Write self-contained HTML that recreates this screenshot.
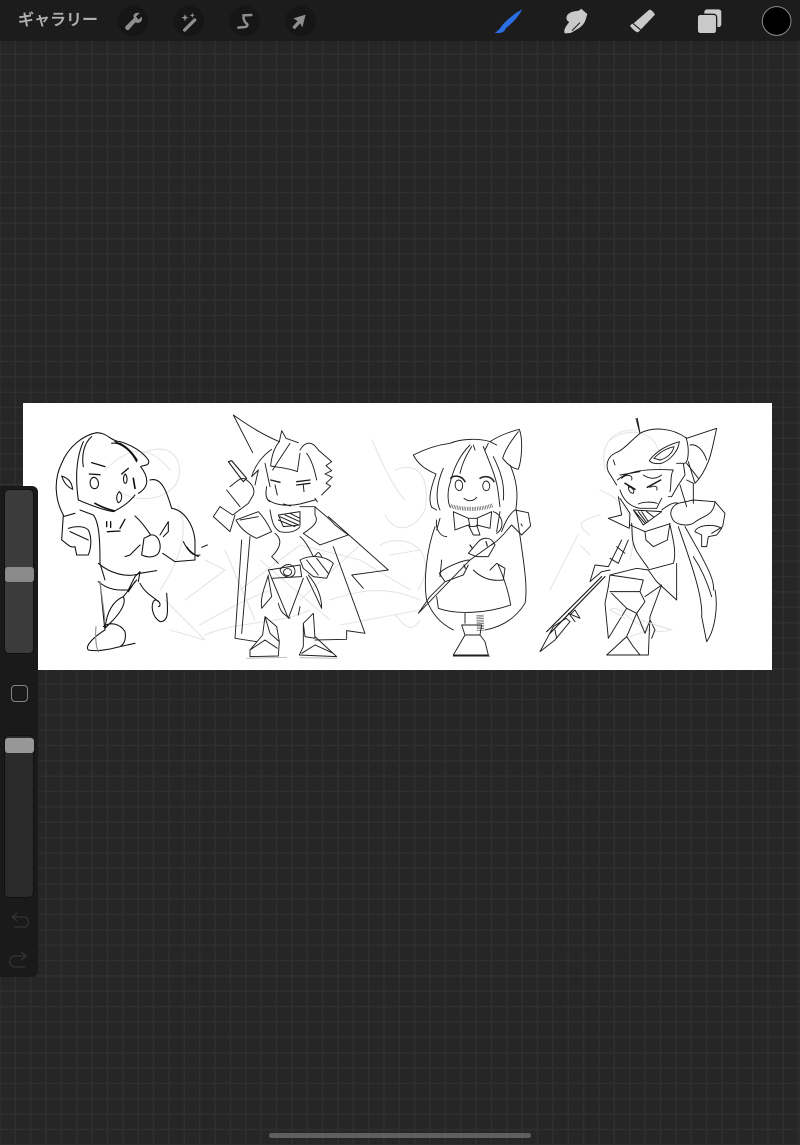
<!DOCTYPE html>
<html lang="ja"><head><meta charset="utf-8"><title>Procreate</title>
<style>
html,body{margin:0;padding:0;background:#262626}
#p{position:relative;width:800px;height:1145px;overflow:hidden;background-color:#262626;
background-image:linear-gradient(90deg,#2f2f2f 1.5px,transparent 1.5px),linear-gradient(#2f2f2f 1.5px,transparent 1.5px);
background-size:15.36px 15.36px;background-position:-.75px 7.5px}
#bar{position:absolute;left:0;top:0;width:800px;height:41px;background:#1c1c1c}
#t{position:absolute;left:18px;top:10px;font:500 16px/22px "Liberation Sans","Noto Sans CJK JP",sans-serif;color:#b0b0b0;white-space:nowrap;width:82px;-webkit-text-stroke:.3px #b0b0b0}
#c{position:absolute;left:23px;top:403px;width:749px;height:267px;background:#fff}
#panel{position:absolute;left:0;top:486px;width:38px;height:491px;background:#1a1a1a;border-radius:0 6px 6px 0}
.s{position:absolute;left:4px;width:30px;border:1px solid #111;box-sizing:border-box;border-radius:5px}
.th{position:absolute;left:5px;width:29px;height:15px;border-radius:3px}
#sq{position:absolute;left:11px;top:199px;width:17px;height:17px;border:1px solid #848484;border-radius:4px;box-sizing:border-box}
#home{position:absolute;left:269px;top:1132.5px;width:262px;height:5px;border-radius:3px;background:#5f5f5f}
svg{position:absolute;left:0;top:0}
.sk{filter:blur(.25px)}
</style></head><body><div id="p">
<div id="c"></div>

<svg width="800" height="1145" viewBox="0 0 800 1145" fill="none" stroke-linecap="round" stroke-linejoin="round">
<g class="sk">
<!-- faint under-sketch -->
<g stroke="#e5e5e5" stroke-width="1.100">
<path d="M140,455 C165,440 185,455 178,480 C170,500 135,505 118,490 M105,470 C130,445 150,445 170,470 M178,505 C190,530 180,560 160,590 M170,630 L205,640 L165,600 M200,625 C225,610 245,600 270,590 M205,635 C240,620 280,625 310,610 M185,600 L225,570 L205,560 M240,590 L300,545 L360,560 L410,590 M260,560 L330,620 M300,600 L360,545 M340,625 L420,610 M225,550 L255,620"/>
<path d="M330,600 C360,590 385,585 420,600 M372,440 C385,470 395,490 405,500 M395,470 C420,460 430,480 425,510 C415,530 395,535 385,515 M380,545 C410,530 440,555 418,590 M390,555 L420,550 M395,615 C405,625 410,635 420,620"/>
<path d="M610,440 C630,425 665,430 660,470 M605,470 C600,445 610,430 635,430 M600,490 C625,500 640,520 630,560 M578,535 L560,570 L550,590 M580,545 L590,555 M590,535 C575,525 580,520 600,515 M610,610 C620,600 640,640 670,630 M620,640 L650,630"/>
</g>

<!-- character 1 -->
<g transform="translate(20,400) scale(.3333)" stroke="#111" stroke-width="3.200">
<path d="M130,345 C105,300 100,240 125,190 C145,140 190,105 230,98 C262,98 270,122 300,125 C335,135 368,155 385,180 C392,198 370,195 362,200 C385,230 390,260 355,280"/>
<path d="M190,125 C170,170 165,230 175,300 M215,110 C190,130 185,170 190,200 M275,130 C300,125 335,155 352,180"/>
<path d="M285,125 C310,135 335,155 350,185 M300,130 C320,140 340,160 350,180" stroke-width="4"/>
<path d="M125,228 C145,235 155,245 158,268 C145,262 132,250 125,228Z M175,300 C210,315 250,330 280,335 C310,320 330,305 345,285"/>
<path d="M225,310 C245,322 265,328 283,333 M340,235 L345,265" stroke-width="5"/>
<path d="M215,188 L255,200 M208,222 L240,224 M305,222 L325,205" stroke-width="4"/>
<path d="M222,232 C240,235 240,268 222,266 C205,262 208,232 222,232Z M316,222 C324,232 322,250 315,250 C308,245 310,225 316,222Z M298,275 C310,285 305,305 295,308 C288,300 288,285 298,275Z"/>
<path d="M130,350 L165,340 M130,345 L125,420 C140,430 150,445 165,440 L170,465 L205,465 C215,440 215,410 205,390 C190,375 160,380 145,385 M150,395 L205,420 M180,330 L220,345 C240,370 240,440 240,490 L255,540"/>
<path d="M260,365 L260,380 M272,365 L272,382 M300,385 L315,358 M262,395 L300,393" stroke-width="4"/>
<path d="M345,348 C370,370 385,395 392,405 C420,400 430,450 410,465 C395,475 375,470 365,465 L372,415 L392,405 M420,405 L445,365 L445,395 L430,410 M360,435 L330,465 L315,470"/>
<path d="M390,240 C425,230 440,275 455,325 C490,330 520,370 525,420 L525,480 L465,485 L428,460 M490,425 C505,455 520,470 540,465 M500,440 C510,455 525,465 535,470 M545,442 L562,435"/>
<path d="M235,490 C270,520 320,535 360,520 L410,512 M240,545 C245,590 250,650 255,690 M235,545 C270,575 305,570 325,570 M325,570 L345,530 L360,515 L355,545"/>
<path d="M360,550 C375,580 400,590 415,605 M440,580 C445,640 445,665 420,665 C395,650 390,610 405,600 C420,600 425,620 415,620"/>
<path d="M255,685 C260,640 275,605 310,590 C320,610 300,640 270,670 L255,685 M310,590 L350,540 M325,575 L345,545 M250,680 C270,665 300,670 315,695 C320,720 310,735 300,740 C265,750 225,755 205,750 C195,740 215,715 255,690 M300,740 L345,730"/>
<path d="M240,545 L255,660 M228,680 C225,710 228,740 235,755" stroke="#8a8a8a"/>
</g>

<!-- character 2 -->
<g transform="translate(200,400) scale(.3333)" stroke="#1e1e1e" stroke-width="2.800">
<path d="M100,45 L158,158 M100,45 C150,80 190,105 238,125 L245,92 L258,115 L295,128"/>
<path d="M85,185 L130,245 L140,235 L95,182Z" stroke-width="3.400"/>
<path d="M215,148 C190,165 165,195 155,230 L175,210 L165,255 M238,125 C225,140 215,165 212,198 C240,203 270,205 292,215 M300,150 C315,125 335,120 355,150 L395,185 L378,197 L395,212 L375,222 L397,232 L378,250 L392,258 L365,285 M270,130 C250,160 230,190 218,210 M195,190 L210,260 M300,160 L292,215 M320,160 C335,180 345,215 350,240"/>
<path d="M205,300 C225,315 260,320 300,312 L345,300 M200,260 C195,285 200,300 210,305 M250,312 L272,318"/>
<path d="M212,240 L240,247 M290,245 L330,240 M290,255 L330,250" stroke-width="4"/>
<path d="M225,255 L232,285 M310,255 L312,275 M345,295 L352,305" stroke-width="3"/>
<path d="M90,260 C105,250 125,225 140,240 C160,255 165,270 160,285 L145,310 L105,340 L98,345 L60,320 L40,350 L90,395 L105,345 M80,270 L120,320"/>
<path d="M108,360 L175,335 C195,355 210,385 215,395 L170,415 C145,405 120,385 108,360Z M120,360 L175,350"/>
<path d="M235,345 L300,335 L300,375 L250,380 Z M240,350 L295,375 M255,345 L300,365 M270,340 L300,355 M235,360 L285,380" stroke-width="3"/>
<path d="M210,330 C215,360 220,385 240,395 C265,400 290,395 300,380 M300,320 L345,320 L345,345 C355,360 350,375 310,400 L360,435 L445,405 L405,375 C385,350 365,340 345,320"/>
<path d="M385,350 L565,510 L455,525 L490,565 M400,440 L495,700 L440,692 L440,718 L345,720 M125,420 L105,715 L170,725 M150,410 L125,700"/>
<path d="M225,400 C250,420 240,445 215,470 L235,490 M300,410 C315,420 330,450 340,470 C355,465 350,445 365,470 M300,480 C325,465 375,465 400,490 L380,535 L340,530 L310,505 Z M320,480 L355,525 M350,475 L385,520"/>
<path d="M205,510 L300,495 L305,530 L215,535 Z M240,510 C255,485 285,490 285,515 C285,535 250,540 240,510Z M250,515 C258,500 275,505 275,518 C270,530 252,530 250,515Z"/>
<path d="M215,535 L265,655 L310,535 M205,525 C195,560 180,590 185,625 L215,590 L205,530 M320,530 L365,625 C365,590 350,555 325,525 M235,610 C240,630 245,640 270,655 M300,620 L295,645"/>
<path d="M195,650 L230,680 L238,725 L210,700 Z M195,650 L188,705 L150,750 L150,770 L235,768 L238,725 M150,750 L195,720 L232,745 M310,670 L340,640 L345,715 L315,710 Z M310,670 L310,740 L298,765 L410,770 L345,710 M305,760 L345,735 L400,760"/>
<path d="M140,775 L260,772 M300,773 L410,775" stroke="#bbb"/>
</g>

<!-- character 3 -->
<g transform="translate(390,400) scale(.3333)" stroke="#1e1e1e" stroke-width="2.800">
<path d="M70,165 C100,150 140,135 180,130 C215,115 270,115 300,125 C330,105 360,95 388,88 C400,120 395,180 385,208 C365,205 350,190 338,175 C345,150 365,120 385,95 M70,165 C85,195 110,210 138,222 M300,125 L320,135"/>
<path d="M138,222 C120,270 115,300 125,322 L140,330 M360,195 C380,240 385,280 378,325"/>
<path d="M240,135 C205,170 190,210 180,250 C170,280 175,310 180,320 M245,140 C220,180 215,200 210,220 M280,140 C295,180 320,230 325,280 L330,320 M160,205 C140,250 135,300 150,330 M310,170 C330,210 345,250 340,300 M255,150 L250,135 M285,150 L295,130"/>
<path d="M182,235 C190,225 215,225 225,245 M270,235 C285,225 305,230 312,245" stroke-width="4.500"/>
<path d="M205,240 C222,240 222,272 207,272 C192,268 192,242 205,240Z M288,243 C302,243 304,272 288,272 C275,270 275,245 288,243Z M222,295 C235,305 250,305 260,292"/>
<path d="M182,318 C220,330 270,330 308,316" stroke="#555" stroke-width="12" stroke-dasharray="2 3" stroke-linecap="butt"/>
<path d="M190,335 L235,355 L260,355 L305,335 L300,385 L260,375 L270,405 L250,405 L235,375 L195,390 Z M235,355 L240,380 L262,378 L262,355"/>
<path d="M140,360 C135,385 150,410 170,410 M150,355 L140,390 M310,335 C340,345 345,385 320,400 M330,335 L320,395"/>
<path d="M375,330 L415,338 L422,378 L395,405 L365,375 C350,390 340,410 305,435 M375,330 C360,340 345,365 335,395 M393,372 L397,378"/>
<path d="M135,380 C110,450 100,540 110,600 C125,640 150,670 190,690 M378,325 C400,480 415,560 405,610 C380,650 340,680 285,690"/>
<path d="M310,430 L240,480 L85,640 L120,590 L165,545 M240,480 C215,480 160,505 148,520 L165,545 L220,525 L235,495 M235,460 L265,425 C280,410 305,410 315,435 L295,470 L260,470 Z M250,510 C270,530 300,545 340,540 L345,505 L320,490 L300,510"/>
<path d="M240,435 L247,445 M288,425 L292,438 M222,495 L226,505" stroke-width="3.500"/>
<path d="M140,590 L145,625 C200,645 290,640 362,615 C355,570 340,530 325,495 M155,480 L150,530"/>
<path d="M225,640 L225,670"/>
<path d="M270,645 L272,695" stroke="#555" stroke-width="22" stroke-dasharray="2 3" stroke-linecap="butt"/>
<path d="M215,675 L275,675 L270,705 L225,705Z M225,705 L190,765 L295,765 L285,725 L270,705 M190,768 L298,768"/>
</g>

<!-- character 4 -->
<g transform="translate(530,400) scale(.3333)" stroke="#1a1a1a" stroke-width="2.800">
<path d="M318,55 L330,100 L322,55 M330,100 C300,125 285,145 265,155 C235,165 225,190 235,215 L260,255 M330,100 C370,78 430,85 470,115 L560,85 C550,130 545,160 535,185 C525,210 510,235 495,250 L475,185"/>
<path d="M468,112 C480,150 475,190 462,190 M480,135 C500,130 520,150 530,180 M470,190 L505,235"/>
<path d="M358,182 C380,150 415,135 448,125 C445,155 420,180 395,190 C380,192 365,190 358,182Z M372,175 C390,155 410,145 432,140 C428,160 410,175 390,180 Z"/>
<path d="M250,180 L255,195 M262,240 C290,215 340,205 430,210 C420,225 425,250 420,275 M275,235 C290,220 310,225 305,240 M340,225 C355,235 375,240 395,225 M270,225 L330,215"/>
<path d="M285,250 L315,268 M352,262 L392,240" stroke-width="4.500"/>
<path d="M295,260 C305,262 315,270 310,280 C300,280 295,270 295,260Z M360,262 C375,255 385,260 380,270"/>
<path d="M270,270 C280,300 300,320 330,325 L380,325 L395,295 M325,312 C340,305 365,305 382,310 M265,290 L275,345 L235,355 L298,385 L300,340 L270,295"/>
<path d="M310,330 L340,375 L395,335 Z M315,335 L345,370 M335,335 L355,365 M350,335 L370,350 M325,335 L350,368" stroke-width="3"/>
<path d="M440,190 L460,190 L465,225 L445,255 L425,290 L415,290 M470,240 L490,250 L490,310 M450,255 L470,320 M395,330 C415,315 430,305 445,310 M425,350 C430,375 470,380 490,370 C520,345 550,350 555,305 L490,300 L445,310 C420,320 420,345 425,350Z M555,305 L585,340 L578,380 L545,400"/>
<path d="M495,395 C500,375 550,370 575,385 L560,405 L535,410 L530,440 L515,440 L515,405 Z M465,380 L510,460 C525,490 555,540 550,570 M445,380 C480,480 520,590 515,650 L530,725 C555,690 565,620 555,570 M490,470 C510,500 530,540 545,590"/>
<path d="M300,375 L345,395 L418,372 M305,370 C308,400 300,430 330,470 L355,505 M345,395 L348,420 L370,440 L412,420 L420,370 M420,375 C430,420 440,460 430,490 L355,510 L320,505 L240,525 L235,560 M355,510 L380,545 L440,600 L440,490"/>
<path d="M275,420 L235,500 L195,495 L180,545 L215,515 L240,510 M260,440 L285,460 M240,475 L265,490 M295,420 L265,490"/>
<path d="M225,530 L60,700 M215,530 L50,695" stroke-width="3.500"/>
<path d="M115,640 L150,655 L135,630 L120,645 L135,665 M70,680 L108,655 L120,665 L75,720 L30,755 Z M75,690 L80,715"/>
<path d="M235,560 L225,610 L235,715 L290,625 L245,580 M240,525 L340,540 L330,575 L240,575 M290,575 L330,575 L345,605 L320,640 L290,625 M345,590 L395,555 L360,650 L355,765 L230,765 L290,710 L320,640 L345,700 L360,660 L375,690 L365,715 M290,710 L310,740 L330,765"/>
</g>
<path d="M640,620 L672,630 M610,610 L625,618" stroke="#e0e0e0"/>
</g>
</svg>

<div id="bar"></div>
<div id="t">ギャラリー</div>

<svg width="800" height="42" viewBox="0 0 800 42">
<g fill="#161616"><circle cx="133" cy="21" r="15.300"/><circle cx="189" cy="21" r="15.300"/><circle cx="244.500" cy="21" r="15.300"/><circle cx="300.500" cy="21" r="15.300"/></g>
<g transform="scale(.3333)">
<path fill="#8e8e8e" d="M376,80 L402,54 C397,44 406,36 419,39 L408,50 L416,59 L425,50 C429,62 419,73 406,67 L386,90 C380,92 374,86 376,80Z"/>
<path stroke="#8e8e8e" stroke-width="10" stroke-linecap="round" d="M554,90 L584,60"/>
<path fill="#8e8e8e" d="M555,42 L558,50 L566,53 L558,56 L555,64 L552,56 L544,53 L552,50Z M577,38 L579,44 L585,46 L579,48 L577,54 L575,48 L569,46 L575,44Z"/>
<path fill="none" stroke="#8e8e8e" stroke-width="7.500" stroke-linecap="round" stroke-linejoin="round" d="M730,46 L754,45 M731,47 C729,60 735,66 739,70 C745,74 742,80 735,81 L715,83"/>
<path fill="#8e8e8e" d="M917,44 L880,55 L893,63 L877,81 L884,88 L901,70 L907,83Z"/>
</g>
<g transform="translate(480,0) scale(.3333)">
<path fill="#2a6fe4" d="M127,28 C105,38 83,58 66,76 L76,86 C97,70 115,50 127,28Z M66,77 C60,85 55,93 44,98 C60,102 74,97 77,86Z"/>
<path fill="#c9c9c9" d="M263,44 C280,28 297,38 303,26 L322,42 C316,60 318,68 298,84 L272,99 L254,100 C250,90 258,78 268,66 C258,62 257,52 263,44Z"/>
<path fill="none" stroke="#1c1c1c" stroke-width="3" d="M276,92 L300,68"/>
<path fill="#c9c9c9" d="M461,70 L507,30 C512,27 520,35 525,44 L483,88Z M450,77 L457,71 L481,91 L473,97 C465,95 455,85 450,77Z"/>
<rect x="673" y="28" width="51" height="53" rx="8" fill="#c9c9c9"/>
<rect x="652" y="43" width="58" height="58" rx="9" fill="#c9c9c9" stroke="#1c1c1c" stroke-width="4"/>
<circle cx="890" cy="63" r="43" fill="#000" stroke="#8a8a8a" stroke-width="3"/>
</g>
</svg>

<div id="panel">
<div class="s" style="top:3px;height:165px;background:#3b3b3b"></div>
<div class="th" style="top:81px;background:#8a8a8a"></div>
<div id="sq"></div>
<div class="s" style="top:249px;height:163px;background:#2a2a2a"></div>
<div class="th" style="top:252px;background:#979797"></div>
<svg width="38" height="491" viewBox="0 0 38 491" fill="none" stroke="#333" stroke-width="1.300">
<path d="M13,431 H24 C30,431 30,441 24,441 H14 M17,427 L12.500,431 L17,435"/>
<path d="M25,470 H15 C8,470 8,481 15,481 H25 M21,466 L26,470 L21,474"/>
</svg>
</div>
<div id="home"></div>
</div></body></html>
